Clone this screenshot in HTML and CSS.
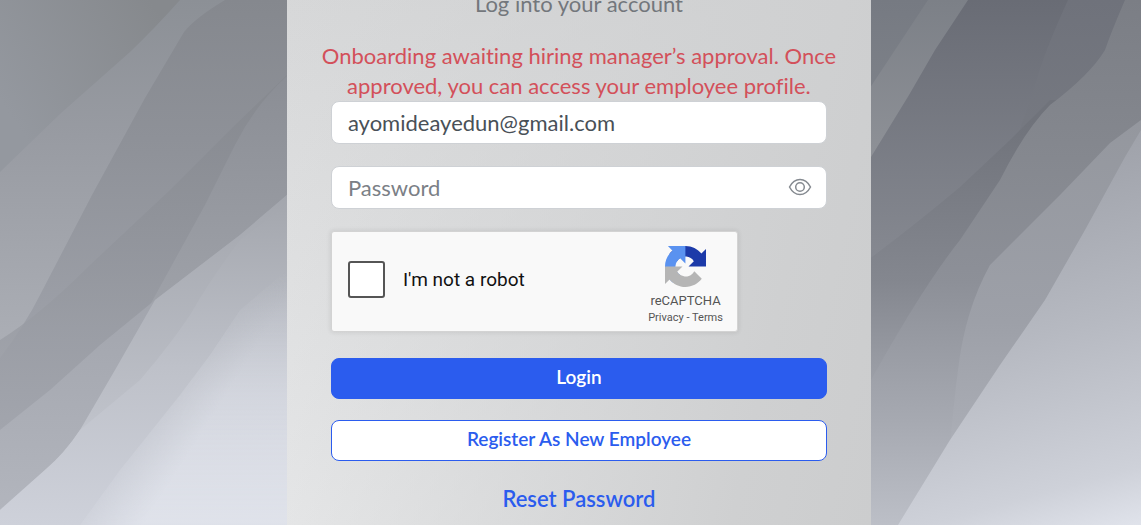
FILE: index.html
```html
<!DOCTYPE html>
<html lang="en">
<head>
  <meta charset="utf-8">
  <meta name="viewport" content="width=device-width, initial-scale=1">
  <title>Employee Login</title>
  <link rel="stylesheet" href="styles.css">
</head>
<body>
  <svg class="backdrop" viewBox="0 0 1141 525" preserveAspectRatio="none" aria-hidden="true">
    <defs>
      <linearGradient id="l1" gradientUnits="userSpaceOnUse" x1="0" y1="100" x2="150" y2="0"><stop offset="0" stop-color="#94989f"/><stop offset="1" stop-color="#86898d"/></linearGradient>
      <linearGradient id="l2" gradientUnits="userSpaceOnUse" x1="0" y1="0" x2="0" y2="340"><stop offset="0" stop-color="#8c9096"/><stop offset=".4" stop-color="#989ba2"/><stop offset="1" stop-color="#abaeb5"/></linearGradient>
      <linearGradient id="l3" gradientUnits="userSpaceOnUse" x1="0" y1="0" x2="0" y2="340"><stop offset="0" stop-color="#85888e"/><stop offset=".45" stop-color="#8f9299"/><stop offset="1" stop-color="#9ea1a9"/></linearGradient>
      <linearGradient id="l4" gradientUnits="userSpaceOnUse" x1="0" y1="80" x2="0" y2="430"><stop offset="0" stop-color="#85888e"/><stop offset=".4" stop-color="#8f9299"/><stop offset="1" stop-color="#a3a6ae"/></linearGradient>
      <linearGradient id="l5" gradientUnits="userSpaceOnUse" x1="0" y1="80" x2="0" y2="300"><stop offset="0" stop-color="#8b8e95"/><stop offset="1" stop-color="#9ea1a8"/></linearGradient>
      <linearGradient id="l6" gradientUnits="userSpaceOnUse" x1="0" y1="300" x2="0" y2="510"><stop offset="0" stop-color="#a2a5ad"/><stop offset="1" stop-color="#b2b5bd"/></linearGradient>
      <linearGradient id="l7" gradientUnits="userSpaceOnUse" x1="0" y1="195" x2="0" y2="430"><stop offset="0" stop-color="#a3a6ad"/><stop offset="1" stop-color="#c0c3cb"/></linearGradient>
      <linearGradient id="l8" gradientUnits="userSpaceOnUse" x1="0" y1="210" x2="0" y2="525"><stop offset="0" stop-color="#a5a8af"/><stop offset=".5" stop-color="#bec1c9"/><stop offset="1" stop-color="#ced1da"/></linearGradient>
      <linearGradient id="l9" gradientUnits="userSpaceOnUse" x1="0" y1="270" x2="0" y2="525"><stop offset="0" stop-color="#dfe2ea" stop-opacity="0"/><stop offset=".5" stop-color="#dfe2ea" stop-opacity=".6"/><stop offset="1" stop-color="#dfe2ea"/></linearGradient>
      <linearGradient id="fade" gradientUnits="userSpaceOnUse" x1="120" y1="440" x2="175" y2="475"><stop offset="0" stop-color="#fff" stop-opacity="0"/><stop offset="1" stop-color="#fff"/></linearGradient>
      <mask id="soft" maskUnits="userSpaceOnUse" x="0" y="0" width="580" height="525"><rect width="580" height="525" fill="url(#fade)"/></mask>
      <linearGradient id="r1" gradientUnits="userSpaceOnUse" x1="0" y1="0" x2="0" y2="150"><stop offset="0" stop-color="#767a82"/><stop offset="1" stop-color="#81858c"/></linearGradient>
      <linearGradient id="r2" gradientUnits="userSpaceOnUse" x1="0" y1="0" x2="0" y2="150"><stop offset="0" stop-color="#7c8087"/><stop offset="1" stop-color="#8d9096"/></linearGradient>
      <linearGradient id="r3" gradientUnits="userSpaceOnUse" x1="0" y1="0" x2="0" y2="255"><stop offset="0" stop-color="#696c75"/><stop offset="1" stop-color="#858890"/></linearGradient>
      <linearGradient id="r4" gradientUnits="userSpaceOnUse" x1="0" y1="0" x2="0" y2="140"><stop offset="0" stop-color="#6f727b"/><stop offset="1" stop-color="#767981"/></linearGradient>
      <linearGradient id="r5" gradientUnits="userSpaceOnUse" x1="0" y1="120" x2="0" y2="525"><stop offset="0" stop-color="#70737b"/><stop offset=".4" stop-color="#84878f"/><stop offset=".74" stop-color="#a6a9b1"/><stop offset="1" stop-color="#bcbfc7"/></linearGradient>
      <linearGradient id="r6" gradientUnits="userSpaceOnUse" x1="0" y1="0" x2="0" y2="525"><stop offset="0" stop-color="#7b7e85"/><stop offset=".3" stop-color="#85888f"/><stop offset=".54" stop-color="#8d9098"/><stop offset=".8" stop-color="#a6a9b1"/><stop offset="1" stop-color="#bcbfc7"/></linearGradient>
      <linearGradient id="r7" gradientUnits="userSpaceOnUse" x1="0" y1="120" x2="0" y2="525"><stop offset="0" stop-color="#94979e"/><stop offset=".5" stop-color="#9da0a8"/><stop offset=".74" stop-color="#a8abb3"/><stop offset="1" stop-color="#bcbfc7"/></linearGradient>
      <linearGradient id="r8" gradientUnits="userSpaceOnUse" x1="1040" y1="160" x2="1141" y2="525"><stop offset="0" stop-color="#9fa2aa"/><stop offset=".45" stop-color="#b6b9c1"/><stop offset=".85" stop-color="#ced1d9"/><stop offset="1" stop-color="#e0e3eb"/></linearGradient>
    </defs>
    <rect fill="url(#l1)" width="580" height="525"/>
    <path fill="url(#l2)" d="M0 172 60 114 130 52Q155 28 180 0H580V525H0Z"/>
    <path fill="url(#l3)" d="M225 0Q195 18 184 32L145 98 92 195 40 295Q25 325 0 358V525H580V0Z"/>
    <path fill="url(#l4)" d="M287 75 235 125 170 190 90 265Q40 315 0 340V525H580V75Z" opacity=".8"/>
    <path fill="url(#l5)" d="M287 76Q255 105 235 145L205 205 150 305 287 300Z"/>
    <path fill="url(#l6)" d="M155 300 100 345 50 390 0 430V525H287V195L240 235Z"/>
    <path fill="url(#l7)" d="M287 195 240 235 155 300 115 370 80 430Q65 453 45 470L0 510V525H580V195Z"/>
    <path fill="url(#l8)" d="M287 205 240 240Q210 280 190 315 170 345 140 380L80 430Q65 453 45 470L0 510V525H580V205Z"/>
    <path fill="url(#l9)" mask="url(#soft)" d="M287 270 240 310 210 355 180 395 120 470 80 525H580V270Z"/>

    <rect fill="url(#r1)" x="580" width="561" height="525"/>
    <path fill="url(#r2)" d="M928 0 860 103V525H1141V0Z"/>
    <path fill="url(#r3)" d="M968 0 935 50 909 95 860 175V525H1141V0Z"/>
    <path fill="url(#r4)" d="M1068 0Q1045 50 1035 85L1018 135 1141 150V0Z"/>
    <path fill="url(#r5)" d="M1050 100 1010 140 960 187Q915 225 860 266V525H1141V100Z"/>
    <path fill="url(#r6)" d="M1125 0Q1112 30 1105 50 1090 75 1050 105 1025 130 1000 180L960 240Q920 290 860 400V525H1141V0Z"/>
    <path fill="url(#r7)" d="M1141 120 1110 143 1060 195 990 265Q965 310 958 370 950 430 945 525H1141Z"/>
    <path fill="url(#r8)" d="M1141 130 1125 157 1085 230 1045 300 1000 365 950 440 898 525H1141Z"/>
  </svg>

  <main class="login-card">
    <h1>Log into your account</h1>
    <p class="error" role="alert">Onboarding awaiting hiring manager’s approval. Once approved, you can access your employee profile.</p>

    <form id="loginForm">
      <input type="email" class="field" value="ayomideayedun@gmail.com" aria-label="Email">

      <div class="password">
        <input type="password" id="password" class="field" placeholder="Password" aria-label="Password">
        <button type="button" id="togglePassword" class="eye" aria-label="Show password">
          <svg width="24" height="18" viewBox="0 0 24 18" fill="none" stroke="#858a90" stroke-width="1.5">
            <path d="M1.5 9C4 4.2 7.6 1.5 12 1.5S20 4.2 22.5 9C20 13.8 16.4 16.5 12 16.5S4 13.8 1.5 9Z"/>
            <circle cx="12" cy="9" r="4.3"/>
          </svg>
        </button>
      </div>

      <div class="captcha">
        <input type="checkbox" id="robot">
        <label for="robot">I'm not a robot</label>
        <div class="captcha-brand">
          <svg width="41" height="41" viewBox="0 0 64 64">
            <path d="M64 31.955l-.033-1.37V4.687l-7.16 7.16C50.948 4.674 42.033.093 32.05.093c-10.4 0-19.622 4.96-25.458 12.64l11.736 11.86a15.55 15.55 0 0 1 4.754-5.334c2.05-1.6 4.952-2.906 8.968-2.906.485 0 .86.057 1.135.163 4.976.393 9.288 3.14 11.828 7.124l-8.307 8.307L64 31.953" fill="#1c3aa9"/>
            <path d="M31.862.094l-1.37.033H4.594l7.16 7.16C4.58 13.147 0 22.06 0 32.046c0 10.4 4.96 19.622 12.64 25.458L24.5 45.768a15.55 15.55 0 0 1-5.334-4.754c-1.6-2.05-2.906-4.952-2.906-8.968 0-.485.057-.86.163-1.135.393-4.976 3.14-9.288 7.124-11.828l8.307 8.307L31.86.095" fill="#5a92f0"/>
            <path d="M.001 32.045l.033 1.37v25.898l7.16-7.16c5.86 7.173 14.774 11.754 24.76 11.754 10.4 0 19.622-4.96 25.458-12.64l-11.736-11.86a15.55 15.55 0 0 1-4.754 5.334c-2.05 1.6-4.952 2.906-8.968 2.906-.485 0-.86-.057-1.135-.163-4.976-.393-9.288-3.14-11.828-7.124l8.307-8.307c-10.522.04-22.4.066-27.295-.005" fill="#b5b5b5"/>
          </svg>
          <span class="captcha-name">reCAPTCHA</span>
          <span class="captcha-links"><a href="#">Privacy</a> - <a href="#">Terms</a></span>
        </div>
      </div>

      <button type="submit" class="btn btn-primary">Login</button>
      <button type="button" class="btn btn-outline">Register As New Employee</button>
    </form>

    <a class="reset" href="#">Reset Password</a>
  </main>

  <script>
    const password = document.getElementById('password');
    document.getElementById('togglePassword').addEventListener('click', function() {
      password.type = password.type === 'password' ? 'text' : 'password';
    });
    document.getElementById('loginForm').addEventListener('submit', function(e) {
      e.preventDefault();
    });
  </script>
</body>
</html>
```
FILE: styles.css
```css
* {
  box-sizing: border-box;
}

body {
  display: grid;
  grid-template-columns: 17fr minmax(0, 584px) 16fr;
  min-height: 100vh;
  margin: 0;
  font-family: Lato, "Liberation Sans", sans-serif;
  font-variant-ligatures: none;
  overflow: hidden;
}

.backdrop {
  position: absolute;
  top: 0;
  left: 0;
  z-index: -1;
  width: 100%;
  height: 100%;
}

.login-card {
  grid-column: 2;
  display: flex;
  flex-direction: column;
  align-items: center;
  margin-top: -11px;
  padding: 0 32px;
  background: linear-gradient(102deg, rgba(226, 227, 228, 0) 0%, #cfd0d1 80%, #cccdce 100%),
    linear-gradient(#d6d7d8, #eaebec);
}

h1 {
  margin: 0 0 22px;
  font-size: 22px;
  font-weight: 400;
  line-height: 30px;
  color: #73777c;
}

.error {
  margin: 0;
  font-size: 22px;
  line-height: 30px;
  text-align: center;
  color: #d3505a;
}

form {
  display: flex;
  flex-direction: column;
  width: 100%;
  padding: 0 12px;
}

.field {
  width: 100%;
  height: 43px;
  padding: 0 16px;
  border: 1px solid #ced1d5;
  border-radius: 8px;
  background: #fff;
  font: inherit;
  font-size: 22px;
  color: #495057;
}

.field::placeholder {
  color: #7b8086;
}

.password {
  position: relative;
  margin: 22px 0;
}

.eye {
  position: absolute;
  top: 12px;
  right: 15px;
  display: flex;
  padding: 0;
  border: none;
  background: none;
  cursor: pointer;
}

.captcha {
  display: flex;
  align-items: center;
  max-width: 407px;
  height: 101px;
  margin-bottom: 26px;
  padding: 0 14px 4px 16px;
  border: 1px solid #d3d3d3;
  border-radius: 3px;
  background: #f9f9f9;
  box-shadow: 0 0 4px 1px rgba(0, 0, 0, 0.08);
  font-family: Roboto, "Liberation Sans", sans-serif;
}

.captcha input {
  appearance: none;
  width: 37px;
  height: 37px;
  margin: 0 18px 0 0;
  border: 2px solid #555;
  border-radius: 3px;
  background: #fff;
}

.captcha input:checked {
  background: #2b5cee;
}

.captcha label {
  font-size: 19px;
  color: #111;
}

.captcha-brand {
  display: flex;
  flex-direction: column;
  align-items: center;
  margin-left: auto;
  padding-top: 12px;
  color: #555;
}

.captcha-name {
  margin-top: 5px;
  font-size: 13px;
  line-height: 18px;
}

.captcha-links {
  font-size: 11px;
  line-height: 16px;
}

.captcha-links a {
  color: inherit;
  text-decoration: none;
}

.btn {
  height: 41px;
  padding: 0 16px 4px;
  border: 1px solid #2b5cee;
  border-radius: 8px;
  font: inherit;
  font-size: 19px;
  font-weight: 600;
  cursor: pointer;
}

.btn-primary {
  margin-bottom: 21px;
  background: #2b5cee;
  color: #fff;
}

.btn-outline {
  background: #fff;
  color: #2b5cee;
}

.reset {
  margin-top: 23px;
  font-size: 22px;
  font-weight: 600;
  line-height: 30px;
  color: #2b5cee;
  text-decoration: none;
}
```
